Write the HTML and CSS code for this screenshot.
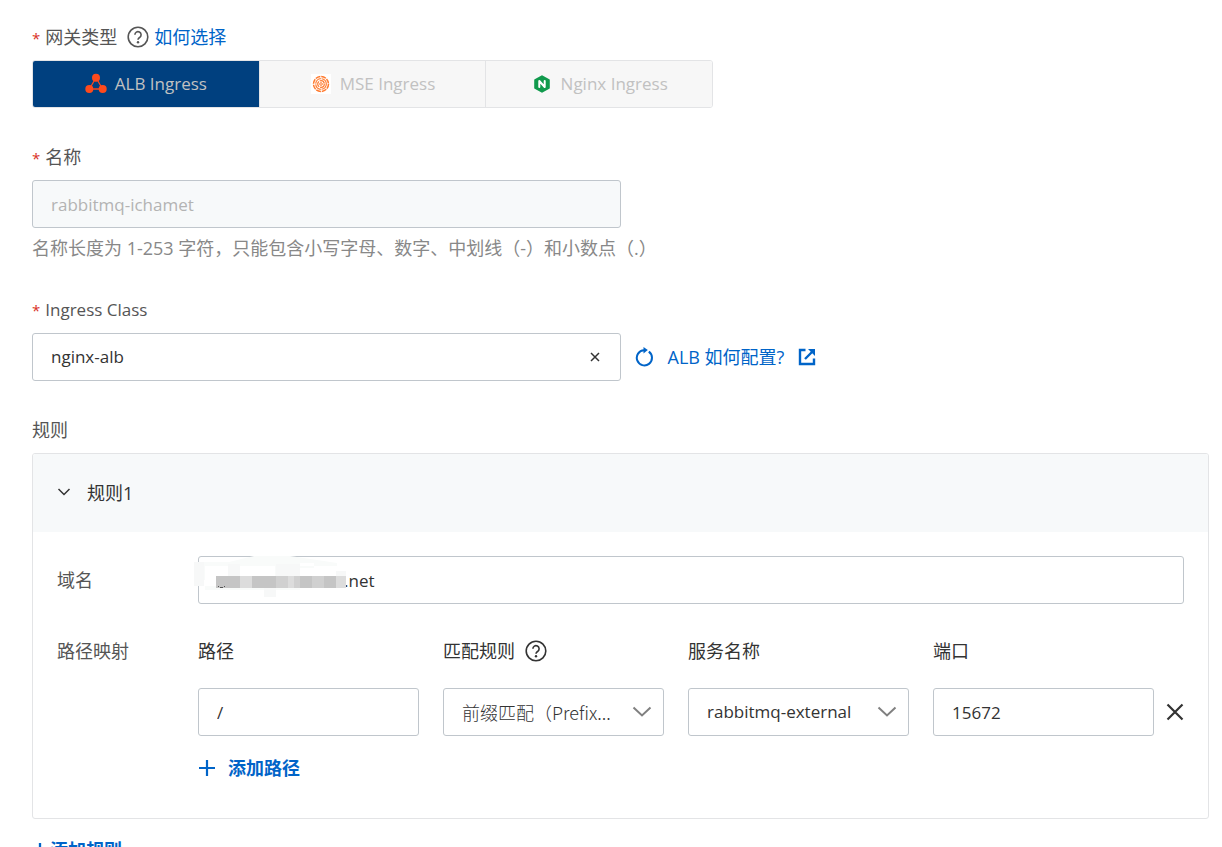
FILE: index.html
```html
<!DOCTYPE html>
<html lang="zh-CN">
<head>
<meta charset="utf-8">
<meta name="viewport" content="width=device-width, initial-scale=1">
<title>Ingress</title>
<link rel="stylesheet" href="styles.css">
</head>
<body>
<form class="form">
  <section class="field">
    <div class="label-row">
      <span class="label required" id="gateway-label">网关类型</span>
      <svg class="icon-help" viewBox="0 0 22 22" aria-hidden="true"><circle cx="11" cy="11" r="9.8"/><path d="M7.9 8.8a3.1 3.1 0 1 1 4.9 2.5c-1.1.8-1.8 1.2-1.8 2.4"/><circle class="dot" cx="11" cy="16.2" r="1.2"/></svg>
      <a class="link" href="#choose">如何选择</a>
    </div>
    <div class="segments" role="group" aria-labelledby="gateway-label">
      <button type="button" class="segment segment-active" disabled>
        <svg class="icon-brand" viewBox="0 0 22 22" aria-hidden="true"><g fill="none" stroke="#f9481c" stroke-width="1.3"><path d="M11 4.5 4.5 16h13z"/></g><g fill="#ff4a1c"><circle cx="11" cy="4.7" r="4"/><circle cx="4.3" cy="16" r="4"/><circle cx="17.7" cy="16" r="4"/></g></svg>
        ALB Ingress
      </button>
      <button type="button" class="segment" disabled>
        <svg class="icon-brand" viewBox="0 0 22 22" aria-hidden="true"><rect width="20" height="20" x="1" y="1" fill="#fff"/><g fill="none" stroke="#ff7a2e"><circle cx="11" cy="11" r="7.5" stroke-width="1.5" stroke-dasharray="5 .89"/><circle cx="11" cy="11" r="5.3" stroke-width="1.2" stroke-dasharray="7.5 .825"/><circle cx="11" cy="11" r="3.3" stroke-width="1.2" stroke-dasharray="6 .91"/><circle cx="11" cy="11" r="1.3" stroke-width="1"/></g></svg>
        MSE Ingress
      </button>
      <button type="button" class="segment" disabled>
        <svg class="icon-brand" viewBox="0 0 22 22" aria-hidden="true"><path fill="#119a4d" stroke="#119a4d" stroke-width="2" stroke-linejoin="round" d="m11 3.3 6.8 3.8v7.8L11 18.7l-6.8-3.8V7.1z"/><path fill="none" stroke="#fff" stroke-width="2" stroke-linecap="round" stroke-linejoin="round" d="M8.3 14V8l5.4 6V8"/></svg>
        Nginx Ingress
      </button>
    </div>
  </section>

  <section class="field">
    <div class="label-row"><label class="label required" for="name">名称</label></div>
    <input class="control half" id="name" type="text" value="rabbitmq-ichamet" disabled>
    <p class="hint">名称长度为 1-253 字符，只能包含小写字母、数字、中划线（-）和小数点（.）</p>
  </section>

  <section class="field">
    <div class="label-row"><label class="label required latin" for="class">Ingress Class</label></div>
    <div class="class-row">
      <div class="control half clearable">
        <input class="bare-input" id="class" type="text" value="nginx-alb">
        <button type="button" class="icon-button" aria-label="清除"><svg class="icon-clear" viewBox="0 0 10 10"><path d="m1 1 8 8M9 1 1 9"/></svg></button>
      </div>
      <button type="button" class="icon-button" aria-label="刷新"><svg class="icon-refresh" viewBox="0 0 20 20"><path d="M14.8 4.6A7.6 7.6 0 1 1 10 3.2"/><path class="solid" d="m9.5 0 4.3 3-4.3 3.5z"/></svg></button>
      <a class="link config-link" href="#config">ALB 如何配置?
        <svg class="icon-external" viewBox="0 0 18 18" aria-hidden="true"><path d="M7.5 2H2v14h14v-5.500M7 11l7-7"/><path class="solid" d="M10 1h7v7z"/></svg>
      </a>
    </div>
  </section>

  <section class="field">
    <div class="label-row"><span class="label">规则</span></div>
    <div class="card">
      <button type="button" class="card-header" aria-expanded="true">
        <svg class="icon-toggle" viewBox="0 0 14 14" aria-hidden="true"><path d="m1.5 3 5.5 5.5L12.5 3"/></svg>
        规则1
      </button>
      <div class="card-body">
        <div class="rule-row">
          <label class="label" for="host">域名</label>
          <div class="host">
            <input class="control host-input" id="host" type="text" value=".net">
            <svg class="mosaic" viewBox="0 0 160 44" aria-hidden="true">
              <path fill="#f9fbfa" d="M0 6h35L60 0h36l27 4 20 3v3H106v9h14V7h-14v27H11V24H0z"/>
              <path fill="#fff" d="M11 10h23v20H11zM46 10h35v18H46zM106 12h54v10h-54z"/>
              <path fill="#f7f8f8" d="M0 6h10v24H0zM34 8h12v22H34zM82 8h24v12H82zM70 27h12v14H70zM142 15h10v6h-10z"/>
              <path fill="#c5c5c5" d="M22 20h24v12H22zM58 20h24v12H58zM106 20h12v12h-12zM130 20h12v12h-12z"/>
              <path fill="#d0d0d0" d="M82 20h24v12H82zM118 20h12v12h-12z"/>
              <path fill="#dcdcdc" d="M46 20h12v12H46zM94 20h6v12h-6zM142 20h10v12h-10z"/>
              <path fill="#555" d="M24 30h1v1h-1zM26 31h3v1h-3zM30 30h1v1h-1z"/>
            </svg>
          </div>
        </div>
        <div class="rule-row path-row">
          <span class="label">路径映射</span>
          <div class="paths">
            <label class="column-title" for="path">路径</label>
            <div class="column-title with-help">
              <label for="match">匹配规则</label>
              <svg class="icon-help" viewBox="0 0 22 22" aria-hidden="true"><circle cx="11" cy="11" r="9.8"/><path d="M7.9 8.8a3.1 3.1 0 1 1 4.9 2.5c-1.1.8-1.8 1.2-1.8 2.4"/><circle class="dot" cx="11" cy="16.2" r="1.2"/></svg>
            </div>
            <label class="column-title" for="service">服务名称</label>
            <label class="column-title" for="port">端口</label>
            <span></span>
            <input class="control" id="path" type="text" value="/">
            <div class="select">
              <select class="control mixed" id="match"><option>前缀匹配（Prefix...</option></select>
              <svg class="icon-arrow" viewBox="0 0 20 12" aria-hidden="true"><path d="m1.5 1.5 8.5 8 8.5-8"/></svg>
            </div>
            <div class="select">
              <select class="control" id="service"><option>rabbitmq-external</option></select>
              <svg class="icon-arrow" viewBox="0 0 20 12" aria-hidden="true"><path d="m1.5 1.5 8.5 8 8.5-8"/></svg>
            </div>
            <input class="control" id="port" type="text" value="15672">
            <button type="button" class="icon-button remove" aria-label="删除"><svg class="icon-remove" viewBox="0 0 18 18"><path d="m1.5 1.5 15 15M16.5 1.5l-15 15"/></svg></button>
          </div>
        </div>
        <button type="button" class="add add-path"><svg class="icon-plus" viewBox="0 0 18 18" aria-hidden="true"><path d="M9 1v16M1 9h16"/></svg>添加路径</button>
      </div>
    </div>
    <button type="button" class="add add-rule"><svg class="icon-plus-small" viewBox="0 0 18 18" aria-hidden="true"><path d="M9 1v16M1 9h16"/></svg>添加规则</button>
  </section>
</form>
</body>
</html>
```
FILE: styles.css
```css
* {
  box-sizing: border-box;
}

body {
  margin: 0;
  overflow: hidden;
  background: #fff;
  color: #333;
  font-family: "Open Sans", "Noto Sans CJK SC", sans-serif;
  font-size: 18px;
  font-weight: 400;
  line-height: 26px;
}

button,
input,
select {
  margin: 0;
  font: inherit;
  color: inherit;
}

svg {
  flex: none;
  fill: none;
  stroke: currentColor;
}

.form {
  display: flex;
  flex-direction: column;
  gap: 36px;
  padding: 24px 13px 0 32px;
}

.label-row {
  display: flex;
  align-items: center;
  height: 26px;
  margin-bottom: 10px;
  color: #555;
}

.label {
  color: #555;
}

.required::before {
  content: "*";
  margin-right: 5px;
  color: #d93026;
  font-size: 15px;
}

.latin,
.segment,
.control,
.bare-input {
  font-size: 17px;
}

.link {
  color: #0064c8;
  text-decoration: none;
}

.icon-help {
  width: 22px;
  height: 22px;
  margin: 0 5px 0 10px;
  stroke-width: 1.6;
}

.dot,
.solid {
  fill: currentColor;
  stroke: none;
}

.segments {
  display: flex;
  max-width: 681px;
  height: 48px;
  border: 1px solid #e3e4e6;
  border-radius: 3px;
  overflow: hidden;
}

.segment {
  display: flex;
  flex: 1;
  align-items: center;
  justify-content: center;
  gap: 8px;
  padding: 0;
  border: 0;
  background: #f7f7f7;
  color: #c1c1c1;
}

.segment + .segment {
  border-left: 1px solid #e3e4e6;
}

.segment-active {
  background: #00407f;
}

.icon-brand {
  width: 22px;
  height: 22px;
  stroke: none;
}

.control {
  display: block;
  width: 100%;
  height: 48px;
  padding: 0 18px;
  border: 1px solid #c0c6cc;
  border-radius: 3px;
  background: #fff;
  color: #333;
}

.control:disabled {
  background: #f7f9fa;
  color: #b3b3b3;
}

.half {
  width: 50%;
}

.hint {
  margin: 7px 0 0;
  color: #888;
}

.class-row {
  display: flex;
  align-items: center;
}

.clearable {
  display: flex;
  align-items: center;
  padding-right: 20px;
}

.bare-input {
  flex: 1;
  min-width: 0;
  padding: 0;
  border: 0;
  background: none;
}

.icon-button {
  display: flex;
  align-items: center;
  justify-content: center;
  padding: 0;
  border: 0;
  background: none;
}

.icon-clear {
  width: 10px;
  height: 10px;
  stroke-width: 1.5;
}

.icon-refresh {
  width: 20px;
  height: 20px;
  margin: 0 14px 0 13px;
  color: #0064c8;
  stroke-width: 2;
}

.config-link {
  display: flex;
  align-items: center;
  gap: 14px;
}

.icon-external {
  width: 18px;
  height: 18px;
  stroke-width: 2.4;
}

.card {
  border: 1px solid #e3e4e6;
  border-radius: 3px;
  overflow: hidden;
}

.card-header {
  display: flex;
  align-items: center;
  gap: 16px;
  width: 100%;
  height: 78px;
  padding: 0 24px;
  border: 0;
  background: #f7f9fa;
}

.icon-toggle {
  width: 14px;
  height: 14px;
  stroke-width: 1.5;
}

.card-body {
  padding: 24px 24px 37px;
}

.rule-row {
  display: grid;
  grid-template-columns: 141px 1fr;
  align-items: center;
}

.path-row {
  align-items: start;
  margin-top: 34px;
}

.host {
  position: relative;
}

.host-input {
  padding-left: 145px;
}

.mosaic {
  position: absolute;
  top: 0;
  left: -4px;
  width: 160px;
  height: 44px;
  stroke: none;
}

.paths {
  display: grid;
  grid-template-columns: repeat(4, minmax(0, 1fr)) 6px;
  gap: 24px;
}

.column-title {
  height: 26px;
}

.with-help {
  display: flex;
  align-items: center;
}

.select {
  position: relative;
}

.select .control {
  padding-right: 40px;
  appearance: none;
}

.select .mixed {
  font-family: "Noto Sans CJK SC", sans-serif;
  font-size: 18px;
  font-weight: 300;
}

.icon-arrow {
  position: absolute;
  top: 18px;
  right: 12px;
  width: 20px;
  height: 12px;
  color: #808080;
  stroke-width: 2;
  pointer-events: none;
}

.remove {
  justify-content: flex-end;
}

.icon-remove {
  width: 18px;
  height: 18px;
  stroke-width: 2.2;
}

.add {
  display: flex;
  align-items: center;
  padding: 0;
  border: 0;
  background: none;
  color: #0064c8;
  font-weight: 700;
}

.add-path {
  gap: 12px;
  margin: 19px 0 0 141px;
}

.icon-plus {
  width: 18px;
  height: 18px;
  stroke-width: 2.2;
}

.add-rule {
  gap: 2px;
  margin-top: 18px;
}

.icon-plus-small {
  width: 16px;
  height: 16px;
  stroke-width: 2.6;
}
```
